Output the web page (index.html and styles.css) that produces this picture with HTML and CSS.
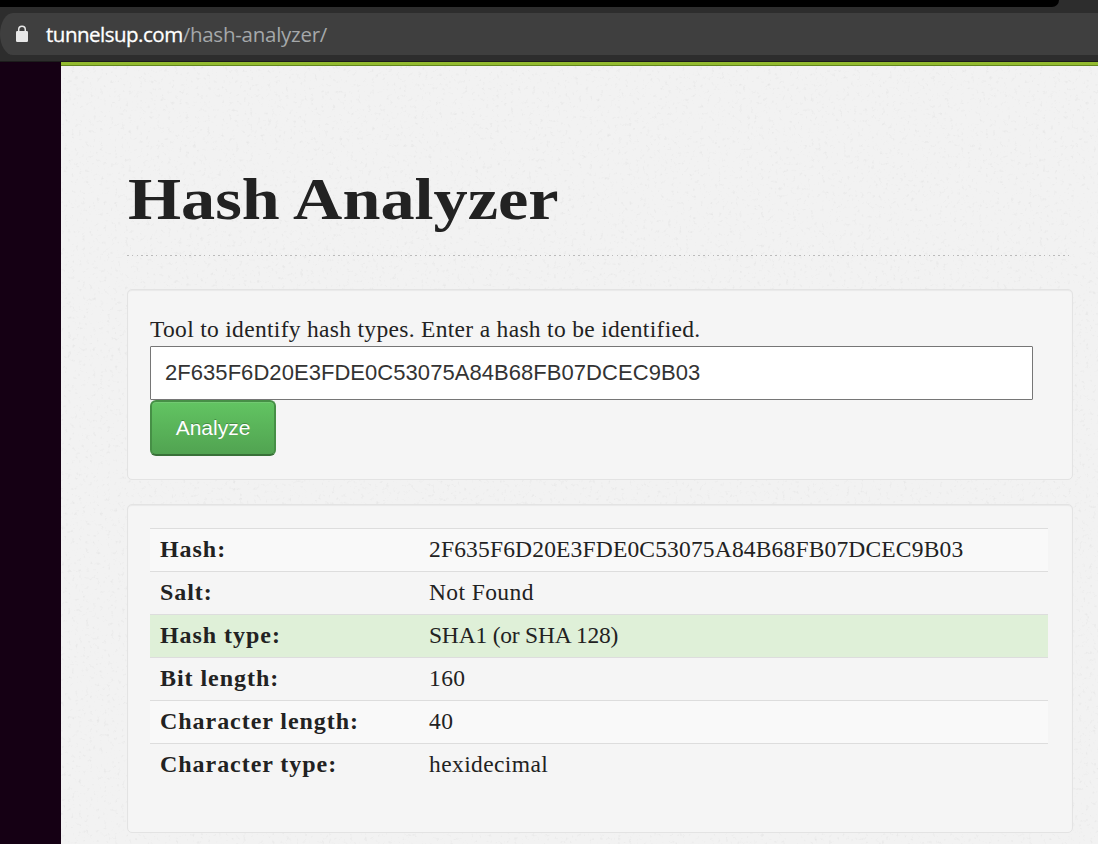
FILE: index.html
```html
<!DOCTYPE html>
<html lang="en">
<head>
    <meta charset="UTF-8">
    <title>Hash Analyzer</title>
    <link rel="stylesheet" href="styles.css">
</head>
<body>
    <div class="browser">
        <div class="tab-strip"></div>
        <div class="address-bar">
            <svg class="lock" width="14" height="18" viewBox="0 0 14 18">
                <path d="M3.7 7V4.6a3.3 3.3 0 0 1 6.6 0V7" fill="none" stroke="#e8e8e8" stroke-width="1.5"/>
                <rect x="1" y="6" width="12" height="11" rx="1.2" fill="#e8e8e8"/>
            </svg>
            <div class="url"><span class="domain">tunnelsup.com</span><span class="path">/hash-analyzer/</span></div>
        </div>
    </div>

    <div class="page">
        <div class="side"></div>
        <main class="content">
            <svg class="texture" width="100%" height="100%">
                <filter id="grain" x="0" y="0" width="100%" height="100%">
                    <feTurbulence type="fractalNoise" baseFrequency="0.28" numOctaves="3" seed="4"/>
                    <feColorMatrix values="0 0 0 0 0.6  0 0 0 0 0.6  0 0 0 0 0.6  0.9 0 0 0 -0.54"/>
                </filter>
                <rect width="100%" height="100%" filter="url(#grain)"/>
            </svg>
            <div class="page-header">
                <h1>Hash Analyzer</h1>
            </div>

            <form class="well form-well" onsubmit="return false">
                <label for="hash">Tool to identify hash types. Enter a hash to be identified.</label>
                <input type="text" id="hash" value="2F635F6D20E3FDE0C53075A84B68FB07DCEC9B03">
                <button class="btn">Analyze</button>
            </form>

            <div class="well result-well">
                <table>
                    <tr><th>Hash:</th><td class="hash-value">2F635F6D20E3FDE0C53075A84B68FB07DCEC9B03</td></tr>
                    <tr><th>Salt:</th><td>Not Found</td></tr>
                    <tr class="success"><th>Hash type:</th><td class="hash-type">SHA1 (or SHA 128)</td></tr>
                    <tr><th>Bit length:</th><td>160</td></tr>
                    <tr><th>Character length:</th><td>40</td></tr>
                    <tr><th>Character type:</th><td>hexidecimal</td></tr>
                </table>
            </div>
        </main>
    </div>
</body>
</html>
```

FILE: styles.css
```css
* {
    box-sizing: border-box;
}

body {
    margin: 0;
    height: 844px;
    overflow: hidden;
    font-family: "Liberation Serif", serif;
    font-size: 23.5px;
    color: #222;
}

.browser {
    height: 62px;
    background: #2d2d2d;
    border-bottom: 1px solid #1c1c1c;
    overflow: hidden;
}

.tab-strip {
    width: 1059px;
    height: 7px;
    background: #000;
    border-bottom-right-radius: 8px;
}

.address-bar {
    display: flex;
    align-items: center;
    width: 1098px;
    height: 42px;
    margin-top: 6px;
    padding-left: 15px;
    background: #3f3f3f;
    border-radius: 13px 0 0 13px / 21px 0 0 21px;
}

.lock {
    margin-right: 17px;
}

.url {
    font: 20.5px/43px "Open Sans", sans-serif;
    white-space: nowrap;
}

.domain {
    color: #fff;
    letter-spacing: -0.5px;
    -webkit-text-stroke: 0.3px #fff;
}

.path {
    color: #a5a8aa;
    letter-spacing: -0.25px;
}

.page {
    display: flex;
    height: 782px;
}

.side {
    flex: 0 0 61px;
    background: #150014;
}

.content {
    position: relative;
    flex: 1;
    padding: 1px 25px 0 66px;
    background: #f2f2f2;
    border-top: 3px solid #93bb2f;
    box-shadow: inset 0 1px 0 #64871f;
}

/* paper grain behind everything */
.texture {
    position: absolute;
    inset: 1px 0 0;
}

.page-header,
.well {
    position: relative;
}

.page-header {
    height: 190px;
    padding-top: 99px;
    background: repeating-linear-gradient(90deg, #bbb 0 1.6px, transparent 1.6px 4.8px) bottom / 100% 1px no-repeat;
}

h1 {
    display: inline-block;
    margin: 0 0 0 1px;
    font-size: 60px;
    line-height: 68px;
    white-space: nowrap;
    transform: scaleX(1.138);
    transform-origin: 0 0;
}

.well {
    background: #f5f5f5;
    border: 1px solid #e3e3e3;
    border-radius: 5px;
    box-shadow: inset 0 1px 1px rgba(0, 0, 0, 0.05);
    padding: 22px;
}

.form-well {
    height: 191px;
    margin-top: 33px;
}

label {
    display: block;
    height: 34px;
    line-height: 34px;
    white-space: nowrap;
    letter-spacing: 0.31px;
}

input {
    display: block;
    width: 883px;
    height: 54px;
    padding: 0 14px;
    border: 1px solid #767676;
    border-radius: 1px;
    background: #fff;
    font: 22px "Liberation Sans", sans-serif;
    letter-spacing: 0.05px;
    color: #333;
}

.btn {
    display: block;
    width: 126px;
    height: 56px;
    padding: 0;
    border: 2px solid #468f46;
    border-bottom-color: #387038;
    border-radius: 6px;
    background: linear-gradient(#62c462, #51a351);
    box-shadow: inset 0 1px 0 rgba(255, 255, 255, 0.1);
    color: #fff;
    font: 21px "Liberation Sans", sans-serif;
    text-shadow: 0 -1px 0 rgba(0, 0, 0, 0.25);
}

.result-well {
    height: 329px;
    margin-top: 24px;
}

table {
    width: 898px;
    margin-top: 1px;
    table-layout: fixed;
    border-collapse: collapse;
}

tr {
    height: 43px;
}

tr:nth-child(odd) {
    background: #f9f9f9;
}

tr.success {
    background: #dff0d8;
}

th,
td {
    padding: 0 10px 2px;
    border-top: 1px solid #ddd;
    line-height: 40px;
    text-align: left;
    white-space: nowrap;
    letter-spacing: 0.4px;
}

th {
    width: 269px;
    font-size: 24px;
    letter-spacing: 0.95px;
}

.hash-value {
    letter-spacing: 0.17px;
}

.hash-type {
    letter-spacing: -0.2px;
}
```
